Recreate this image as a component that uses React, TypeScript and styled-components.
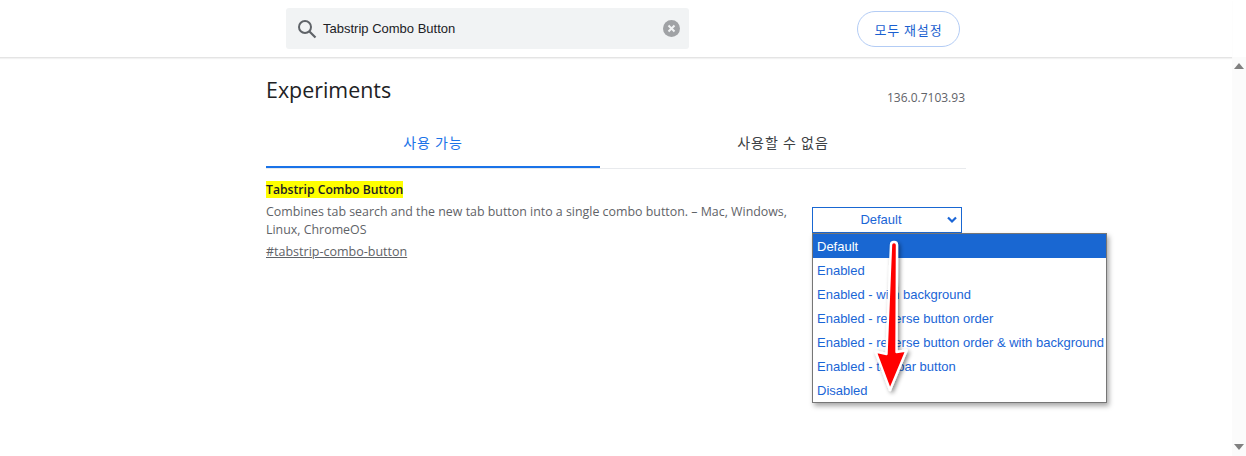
import { createGlobalStyle, styled } from "styled-components"

const GlobalStyle = createGlobalStyle`
html, body {
    margin: 0;
    padding: 0;
    background: #ffffff;
    overflow: hidden;
}
body {
    font-family: "Open Sans", "Noto Sans CJK KR", sans-serif;
}
`
const Page = styled.div`
width: 1246px;
height: 456px;
display: flex;
flex-direction: column;
overflow: hidden;
`
const Header = styled.header`
height: 58px;
flex-shrink: 0;
width: 1232px;
display: flex;
justify-content: center;
box-sizing: border-box;
border-bottom: 1px solid #e4e4e4;
box-shadow: 0 1px 1px #f2f2f2;
position: relative;
`
const HeaderInner = styled.div`
width: 700px;
padding: 8px 6px 0 20px;
box-sizing: border-box;
display: flex;
align-items: flex-start;
justify-content: space-between;
`
const Search = styled.div`
width: 403px;
height: 41px;
background: #f1f3f4;
border-radius: 3px;
display: flex;
align-items: center;
box-sizing: border-box;
padding: 0 9px 0 11px;
`
const SearchText = styled.span`
flex: 1;
margin-left: 6px;
font-family: "Liberation Sans", Arial, sans-serif;
font-size: 13px;
color: #202124;
`
const ResetButton = styled.button`
margin-top: 3px;
width: 103px;
height: 36px;
border-radius: 18px;
border: 1px solid #b3ccf5;
background: #ffffff;
color: #1a5fd0;
font-family: "Noto Sans CJK KR", sans-serif;
font-size: 13px;
letter-spacing: 0.9px;
padding: 0;
`
const Body = styled.div`
flex: 1;
display: flex;
min-height: 0;
`
const Main = styled.main`
flex: 1;
display: flex;
justify-content: center;
`
const Content = styled.div`
width: 700px;
position: relative;
`
const TitleRow = styled.div`
display: flex;
justify-content: space-between;
height: 65px;
`
const Title = styled.h1`
margin: 16px 0 0;
font-size: 21.4px;
line-height: 32px;
font-weight: 400;
color: #202124;
`
const Version = styled.div`
margin: 32px 1px 0 0;
font-size: 12px;
line-height: 16px;
color: #5f6368;
`
const Tabs = styled.div`
display: flex;
height: 45px;
border-bottom: 1px solid #e8eaed;
`
const Tab = styled.div<{ $active?: boolean }>`
width: ${(p) => (p.$active ? "334px" : "366px")};
height: 45px;
box-sizing: border-box;
padding-top: 9px;
text-align: center;
font-family: "Noto Sans CJK KR", sans-serif;
font-size: 14px;
line-height: 20px;
letter-spacing: 1px;
color: ${(p) => (p.$active ? "#1a73e8" : "#3c4043")};
border-bottom: 2px solid ${(p) => (p.$active ? "#1a73e8" : "transparent")};
`
const Row = styled.div`
display: flex;
justify-content: space-between;
padding-top: 12px;
`
const Info = styled.div`
width: 530px;
`
const FlagName = styled.h2`
margin: 0;
font-size: 12.2px;
line-height: 17px;
font-weight: 600;
color: #202124;
`
const Mark = styled.mark`
background: #ffff00;
color: inherit;
`
const Description = styled.p`
margin: 5px 0 0;
font-size: 12.4px;
line-height: 17.5px;
color: #5f6368;
`
const FlagLink = styled.a`
display: block;
margin-top: 5px;
font-size: 12.5px;
line-height: 18px;
color: #5f6368;
text-decoration: underline;
`
const Control = styled.div`
margin: 26px 4px 0 0;
width: 150px;
position: relative;
`
const SelectBox = styled.div`
height: 26px;
box-sizing: border-box;
border: 1px solid #1967d2;
font-family: "Liberation Sans", Arial, sans-serif;
font-size: 13px;
line-height: 23px;
color: #1a65d6;
text-align: center;
padding-right: 12px;
position: relative;
`
const Chevron = styled.svg`
position: absolute;
right: 3px;
top: 8px;
`
const Menu = styled.ul`
position: absolute;
top: 26px;
left: 0;
width: 295px;
box-sizing: border-box;
margin: 0;
padding: 0;
list-style: none;
background: #ffffff;
border: 1px solid #767676;
box-shadow: 2px 3px 5px rgba(0, 0, 0, 0.35);
`
const Option = styled.li<{ $selected?: boolean }>`
height: 24px;
line-height: 26px;
padding-left: 4px;
white-space: nowrap;
font-family: "Liberation Sans", Arial, sans-serif;
font-size: 13px;
color: ${(p) => (p.$selected ? "#ffffff" : "#1a65d6")};
background: ${(p) => (p.$selected ? "#1967d2" : "transparent")};
`
const Arrow = styled.svg`
position: absolute;
left: 862px;
top: 236px;
overflow: visible;
`
const Scrollbar = styled.div`
width: 14px;
flex-shrink: 0;
margin-left: auto;
margin-top: -1px;
background: #fbfbfb;
display: flex;
flex-direction: column;
justify-content: space-between;
align-items: center;
padding: 6px 0 6px;
box-sizing: border-box;
`
const Overlay = styled.div`
position: absolute;
left: 0;
top: 0;
`

const options = [
    "Default",
    "Enabled",
    "Enabled - with background",
    "Enabled - reverse button order",
    "Enabled - reverse button order & with background",
    "Enabled - toolbar button",
    "Disabled",
]

export default function App() {
    return <>
        <GlobalStyle />
        <Page>
            <Header>
                <HeaderInner>
                    <Search>
                        <svg width="20" height="20" viewBox="0 0 20 20" fill="none">
                            <circle cx="8" cy="8" r="6" stroke="#5f6368" strokeWidth="2" />
                            <path d="M12.5 12.5L18.5 18.5" stroke="#5f6368" strokeWidth="2.2" />
                        </svg>
                        <SearchText>Tabstrip Combo Button</SearchText>
                        <svg width="17" height="17" viewBox="0 0 17 17">
                            <circle cx="8.5" cy="8.5" r="8.5" fill="#a0a2a5" />
                            <path d="M5.5 5.5L11.5 11.5M11.5 5.5L5.5 11.5" stroke="#f1f3f4" strokeWidth="2" />
                        </svg>
                    </Search>
                    <ResetButton>모두 재설정</ResetButton>
                </HeaderInner>
            </Header>
            <Body>
                <Main>
                    <Content>
                        <TitleRow>
                            <Title>Experiments</Title>
                            <Version>136.0.7103.93</Version>
                        </TitleRow>
                        <Tabs>
                            <Tab $active>사용 가능</Tab>
                            <Tab>사용할 수 없음</Tab>
                        </Tabs>
                        <Row>
                            <Info>
                                <FlagName><Mark>Tabstrip Combo Button</Mark></FlagName>
                                <Description>Combines tab search and the new tab button into a single combo button. – Mac, Windows, Linux, ChromeOS</Description>
                                <FlagLink>#tabstrip-combo-button</FlagLink>
                            </Info>
                            <Control>
                                <SelectBox>
                                    Default
                                    <Chevron width="12" height="8" viewBox="0 0 12 8" fill="none">
                                        <path d="M2 1.5L6 5.5L10 1.5" stroke="#1a65d6" strokeWidth="2.2" />
                                    </Chevron>
                                </SelectBox>
                                <Menu>
                                    {options.map((o, i) => <Option key={o} $selected={i === 0}>{o}</Option>)}
                                </Menu>
                            </Control>
                        </Row>
                    </Content>
                </Main>
                <Scrollbar>
                    <svg width="10" height="6" viewBox="0 0 10 6"><path d="M5 0L10 6H0Z" fill="#808080" /></svg>
                    <svg width="10" height="6" viewBox="0 0 10 6"><path d="M0 0H10L5 6Z" fill="#808080" /></svg>
                </Scrollbar>
            </Body>
            <Overlay>
                <Arrow width="50" height="160" viewBox="0 0 50 160">
                    <defs>
                        <filter id="arrowShadow" x="-40%" y="-10%" width="180%" height="120%">
                            <feDropShadow dx="2" dy="2" stdDeviation="2" floodColor="#000" floodOpacity="0.45" />
                        </filter>
                    </defs>
                    <path d="M29 9 C29 5 35 5 35 9 L34.5 116 L44.5 114.5 L28 154 L13.5 115.5 L24.5 118 Z" fill="#f00" stroke="#fff" strokeWidth="2.4" strokeLinejoin="round" filter="url(#arrowShadow)" />
                </Arrow>
            </Overlay>
        </Page>
    </>
}
